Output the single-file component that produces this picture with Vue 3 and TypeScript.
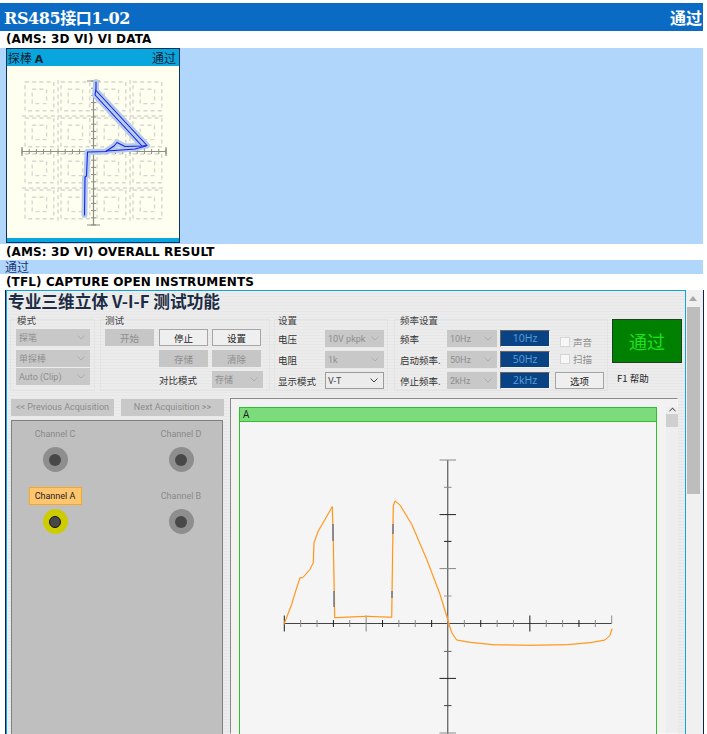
<script setup lang="ts">
type Field = { label: string; value: string; enabled?: boolean }

const modeSelects = ['探笔', '单探棒', 'Auto (Clip)']
const settings: Field[] = [
  { label: '电压', value: '10V pkpk' },
  { label: '电阻', value: '1k' },
  { label: '显示模式', value: 'V-T', enabled: true },
]
const freqRows = [
  { label: '频率', value: '10Hz', shown: '10Hz' },
  { label: '启动频率.', value: '50Hz', shown: '50Hz' },
  { label: '停止频率.', value: '2kHz', shown: '2kHz' },
]
const channels = [
  { name: 'Channel C', active: false },
  { name: 'Channel D', active: false },
  { name: 'Channel A', active: true },
  { name: 'Channel B', active: false },
]

// background marks of the small VI plot, 4 x 4 tiles of 36px
const tiles: { x: number; y: number }[] = []
for (let r = 0; r < 4; r++) {
  for (let c = 0; c < 4; c++) tiles.push({ x: 22 + c * 36, y: 80 + r * 36 })
}

const hTicks = Array.from({ length: 21 }, (_, i) => {
  const x = 284.3 + i * 16.37
  let d = `M${x} 619V626`
  if (i === 0 || i === 5 || i === 15) d = `M${x} 614.5V630.5`
  if (i === 20) d = `M${x} 614.5V622.5`
  const dark = i % 3 === 0 && i !== 5
  return { d, color: dark ? '#1c1c1c' : i === 5 ? '#888' : '#8a8a8a' }
})
const vTicks = [
  { y: 459, long: true, color: '#8a8a8a' },
  { y: 486.3, long: false, color: '#8a8a8a' },
  { y: 513.6, long: true, color: '#222' },
  { y: 540.4, long: false, color: '#222' },
  { y: 567.6, long: true, color: '#888' },
  { y: 595, long: false, color: '#999' },
  { y: 650.4, long: false, color: '#666' },
  { y: 677.4, long: true, color: '#222' },
  { y: 704.6, long: false, color: '#444' },
  { y: 732, long: true, color: '#8a8a8a' },
]

const viTrace =
  'M96 82 L96 89 L95 95 L142 146 L147 145.5 L95.5 90 M142 146 L125 146.5 L117 142.5 L114 146 L108 150 L106 151.5 L87.5 152 L86.5 176 L85 177 L84.5 215'
const viExtra = 'M106 151 L122 150 L135 149 L146 146'
const mainTrace =
  'M284 623.3 L291.7 603.3 L295.7 590 L300 576.7 L302.7 576.7 L310 568.3 L313.3 561.7 L314 541.7 L318.3 530 L332.3 505.7 L333.3 540 L334.7 616.7 L366.7 615.3 L391.7 616.3 L393.3 505 L395 500 L400 504 L411.7 523.3 L426.7 558.3 L440 593.3 L447.7 618.3 L451.7 631.7 L456.7 639 L470 641.3 L493 643.7 L530 644.3 L566.7 643.7 L590 641.7 L605 639 L610 634.3 L612 627.7'
</script>

<template>
  <div class="page">
    <header class="top-bar">
      <span>RS485接口1-02</span>
      <span class="top-result">通过</span>
    </header>

    <div class="section-title">(AMS: 3D VI) VI DATA</div>
    <div class="vi-strip">
      <div class="vi-card">
        <div class="vi-head">
          <span>探棒 <b>A</b></span>
          <span>通过</span>
        </div>
        <svg class="vi-plot" viewBox="7 66 172 172" width="172" height="172">
          <g fill="none" stroke="#d6d6d4" stroke-width="1.4" stroke-dasharray="4 3.2">
            <g v-for="t in tiles" :key="`${t.x}-${t.y}`">
              <rect :x="t.x + 3" :y="t.y + 2" width="28.8" height="28.8" />
              <rect :x="t.x + 10.2" :y="t.y + 9.2" width="14.4" height="14.4" />
            </g>
            <path d="M22 116H166M22 188H166M58 80V224M130 80V224" />
          </g>
          <g stroke="#8d8d86" fill="none">
            <path d="M22 151.5H166M93.5 81V225" stroke-width="1.2" />
            <path v-for="i in 21" :key="i" :d="`M${22 + (i - 1) * 7.2} 149V154`" />
            <path v-for="i in 21" :key="'v' + i" :d="`M91 ${81 + (i - 1) * 7.2}H96`" />
            <path d="M22 147V156M166 147V156M87 81H100M87 225H100" stroke-width="1.2" />
          </g>
          <g fill="none" stroke-linejoin="round" stroke-linecap="round">
            <path :d="viTrace" stroke="#b7cbe8" stroke-width="6" />
            <path :d="viExtra" stroke="#b7cbe8" stroke-width="5" />
            <path :d="viTrace" stroke="#1420f0" stroke-width="1.1" />
            <path :d="viExtra" stroke="#1420f0" stroke-width="1.1" />
          </g>
        </svg>
        <div class="vi-foot"></div>
      </div>
    </div>

    <div class="section-title">(AMS: 3D VI) OVERALL RESULT</div>
    <div class="result-strip">通过</div>
    <div class="section-title">(TFL) CAPTURE OPEN INSTRUMENTS</div>

    <div class="capture">
      <div class="app-window">
        <h1 class="app-title">专业三维立体 V-I-F 测试功能</h1>

        <div class="toolbar">
          <section class="group group-mode">
            <div class="legend">模式</div>
            <div class="mode-list">
              <div v-for="m in modeSelects" :key="m" class="select">
                <span>{{ m }}</span>
                <svg class="chev" viewBox="0 0 8 5" width="8" height="5"><path d="M.5 .5 4 4 7.5 .5" /></svg>
              </div>
            </div>
          </section>

          <section class="group group-test">
            <div class="legend">测试</div>
            <div class="test-grid">
              <button class="btn off">开始</button>
              <button class="btn">停止</button>
              <button class="btn">设置</button>
              <span></span>
              <button class="btn off">存储</button>
              <button class="btn off">清除</button>
              <span></span>
              <span class="label">对比模式</span>
              <div class="select compare">
                <span>存储</span>
                <svg class="chev" viewBox="0 0 8 5" width="8" height="5"><path d="M.5 .5 4 4 7.5 .5" /></svg>
              </div>
            </div>
          </section>

          <section class="group group-set">
            <div class="legend">设置</div>
            <div class="set-grid">
              <template v-for="f in settings" :key="f.label">
                <span class="label">{{ f.label }}</span>
                <div class="select" :class="{ live: f.enabled }">
                  <span>{{ f.value }}</span>
                  <svg class="chev" viewBox="0 0 8 5" width="8" height="5"><path d="M.5 .5 4 4 7.5 .5" /></svg>
                </div>
              </template>
            </div>
          </section>

          <section class="group group-freq">
            <div class="legend">频率设置</div>
            <div class="freq-grid">
              <template v-for="(f, i) in freqRows" :key="f.label">
                <span class="label">{{ f.label }}</span>
                <div class="select">
                  <span>{{ f.value }}</span>
                  <svg class="chev" viewBox="0 0 8 5" width="8" height="5"><path d="M.5 .5 4 4 7.5 .5" /></svg>
                </div>
                <div class="readout">{{ f.shown }}</div>
                <label v-if="i === 0" class="check first"><i></i>声音</label>
                <label v-else-if="i === 1" class="check second"><i></i>扫描</label>
                <button v-else class="btn">选项</button>
              </template>
            </div>
          </section>

          <section class="status">
            <div class="pass">通过</div>
            <div class="help">F1 帮助</div>
          </section>
        </div>

        <div class="work">
          <div class="left-col">
            <div class="nav">
              <div class="nav-btn">&lt;&lt; Previous Acquisition</div>
              <div class="nav-btn">Next Acquisition &gt;&gt;</div>
            </div>
            <div class="channels">
              <div v-for="c in channels" :key="c.name" class="channel">
                <div class="ch-name" :class="{ on: c.active }">{{ c.name }}</div>
                <div class="jack" :class="{ on: c.active }"><i></i></div>
              </div>
            </div>
          </div>

          <div class="plot-panel">
            <div class="plot">
              <div class="plot-head">A</div>
              <svg class="plot-svg" viewBox="240 421 416 313" width="416" height="313">
                <g fill="none">
                  <path d="M284.3 622.5H611.7" stroke="#444" />
                  <path d="M447.7 459V734" stroke="#6f6f6f" stroke-width="1.4" />
                  <path v-for="(t, i) in hTicks" :key="i" :d="t.d" :stroke="t.color" />
                  <path v-for="t in vTicks" :key="t.y"
                    :d="t.long ? `M439.5 ${t.y}H456` : `M444 ${t.y}H451.5`"
                    :stroke="t.color" />
                </g>
                <path :d="mainTrace" fill="none" stroke="#ffc78f" stroke-width="1.6" stroke-opacity=".6" stroke-linejoin="round" />
                <path :d="mainTrace" fill="none" stroke="#ff8c00" stroke-width=".9" stroke-linejoin="round" />
                <path d="M333 523V540M334 590V606M393 523V533M392 590V597" stroke="#4a6a9a" stroke-width="1.2" />
              </svg>
            </div>
            <div class="plot-scroll">
              <svg viewBox="0 0 8 5" width="7" height="5"><path d="M.5 4.5 4 1 7.5 4.5" fill="none" stroke="#555" stroke-width="1.2" /></svg>
              <div class="plot-thumb"></div>
            </div>
          </div>
        </div>
      </div>

      <div class="page-scroll">
        <div class="arrow"></div>
        <div class="thumb"></div>
      </div>
    </div>
  </div>
</template>

<style scoped>
.page {
  width: 707px;
  height: 734px;
  overflow: hidden;
  padding-top: 3px;
  box-sizing: border-box;
  background: #fff;
  font-family: "DejaVu Sans", "Noto Sans CJK SC", sans-serif;
  color: #000;
}

.top-bar {
  width: 703px;
  height: 28px;
  box-sizing: border-box;
  padding: 0 1px 0 4px;
  display: flex;
  align-items: center;
  justify-content: space-between;
  background: #0b6bc4;
  color: #fff;
  font-size: 16px;
  font-weight: 700;
  letter-spacing: -0.4px;
  font-family: "DejaVu Serif", "Noto Sans CJK SC", serif;
}
.top-result {
  font-family: "Noto Sans CJK SC", sans-serif;
  letter-spacing: 0;
}

.section-title {
  height: 16px;
  padding-left: 6px;
  font-size: 12px;
  letter-spacing: 0.12px;
  line-height: 16px;
  font-weight: 700;
  white-space: nowrap;
}
.top-bar + .section-title {
  height: 17px;
}

.vi-strip {
  width: 703px;
  height: 196px;
  background: #b0d6fc;
  padding-left: 6px;
  box-sizing: border-box;
}
.vi-card {
  width: 174px;
  height: 195px;
  box-sizing: border-box;
  border: 1px solid #10305a;
  background: #fffff0;
  display: flex;
  flex-direction: column;
}
.vi-head {
  height: 17px;
  display: flex;
  justify-content: space-between;
  align-items: center;
  padding: 0 3px 0 1px;
  background: #09a6de;
  color: #123;
  font-size: 12px;
  font-family: "Noto Sans CJK SC", sans-serif;
}
.vi-head b {
  font-family: "DejaVu Sans", sans-serif;
  font-size: 11px;
}
.vi-plot {
  display: block;
  flex: none;
}
.vi-foot {
  flex: 1;
  background: #09a6de;
}

.result-strip {
  width: 703px;
  height: 14px;
  padding-left: 5px;
  box-sizing: border-box;
  background: #b0d6fc;
  color: #1a3672;
  font-size: 12px;
  line-height: 14px;
  font-family: "Noto Sans CJK SC", sans-serif;
}

.capture {
  width: 699px;
  height: 444px;
  margin-left: 5px;
  box-sizing: border-box;
  border-left: 1px solid #0b2447;
  border-right: 1px solid #0b2447;
  display: flex;
}
.app-window {
  width: 680px;
  box-sizing: border-box;
  border: 1px solid #0aa5e2;
  border-bottom: none;
  background: repeating-linear-gradient(180deg, #ececec 0 2px, #e7e7e7 2px 3px);
  font-family: "Noto Sans CJK SC", sans-serif;
}
.app-title {
  margin: 0;
  height: 28px;
  padding-left: 1px;
  font-size: 16.7px;
  line-height: 21px;
  font-weight: 700;
  color: #1c2c44;
  white-space: nowrap;
}

.toolbar {
  display: flex;
  padding-left: 3px;
  height: 79px;
  box-sizing: border-box;
  padding-bottom: 7px;
  font-size: 9.5px;
  color: #333;
}
.group {
  position: relative;
  border: 1px solid #e3e3e3;
  box-sizing: border-box;
  padding-top: 9px;
}
.legend {
  position: absolute;
  top: -7px;
  left: 6px;
  line-height: 14px;
  color: #444;
}
.group-mode {
  width: 85px;
  padding-left: 5px;
}
.mode-list {
  display: flex;
  flex-direction: column;
  gap: 1px;
}
.mode-list .select {
  width: 74px;
}
.mode-list .select:first-child {
  margin-bottom: 3px;
}
.group-test {
  width: 170px;
  margin-left: 5px;
  padding-left: 4px;
}
.group-test .legend {
  left: 4px;
}
.test-grid {
  display: grid;
  grid-template-columns: 50px 49px 51px;
  grid-auto-rows: 17px;
  column-gap: 4px;
  row-gap: 4px;
}
.test-grid .btn {
  width: 49px;
}
.group-set {
  width: 114px;
  margin-left: 4px;
  padding: 10px 0 0 3px;
}
.group-set .legend {
  left: 3px;
}
.set-grid {
  display: grid;
  grid-template-columns: 47px 59px;
  grid-auto-rows: 17px;
  row-gap: 4px;
}
.group-freq {
  width: 214px;
  margin-left: 6px;
  padding: 10px 0 0 5px;
}
.group-freq .legend {
  left: 5px;
}
.freq-grid {
  display: grid;
  grid-template-columns: 47px 50px 50px 49px;
  grid-auto-rows: 17px;
  row-gap: 4px;
  column-gap: 0;
}
.freq-grid .readout {
  margin-left: 3px;
  width: 50px;
}
.freq-grid .check {
  margin-left: 13px;
}
.freq-grid .btn {
  margin-left: 8px;
  width: 49px;
}
.label {
  display: flex;
  align-items: center;
  white-space: nowrap;
  color: #333;
}
.select {
  height: 17px;
  box-sizing: border-box;
  display: flex;
  align-items: center;
  justify-content: space-between;
  padding: 0 5px 0 3px;
  background: #c8c8c8;
  color: #8e8e8e;
  font-size: 9px;
  font-family: Roboto, "Noto Sans CJK SC", sans-serif;
  white-space: nowrap;
  overflow: hidden;
}
.select.live {
  background: #ececec;
  border: 1px solid #9c9c9c;
  color: #444;
  padding-left: 2px;
}
.chev {
  flex: none;
  fill: none;
  stroke: #adadad;
  stroke-width: 1;
}
.select.live .chev {
  stroke: #444;
}
.btn {
  padding: 0;
  height: 17px;
  box-sizing: border-box;
  border: 1px solid #a6a6a6;
  background: #efefef;
  color: #222;
  font: inherit;
  font-size: 9.5px;
  line-height: 14px;
}
.btn.off {
  border-color: #c6c6c6;
  background: #c6c6c6;
  color: #8e8e8e;
}
.readout {
  height: 17px;
  box-sizing: border-box;
  border: 1px solid #f4f4f4;
  border-top-color: #666;
  border-left-color: #666;
  background: #0a4384;
  color: #5a9fde;
  font-size: 10.5px;
  font-family: "Open Sans", sans-serif;
  line-height: 15px;
  text-align: center;
}
.check {
  display: flex;
  align-items: center;
  gap: 3px;
  color: #909090;
  font-size: 9.5px;
}
.check.first {
  align-self: end;
  height: 10px;
}
.check.second {
  margin-top: -2px;
}
.check i {
  width: 10px;
  height: 10px;
  background: #f7f7f7;
  border: 1px solid #d6d6d6;
  box-sizing: border-box;
}
.status {
  margin-left: 4px;
  width: 70px;
}
.pass {
  height: 44px;
  box-sizing: border-box;
  border: 1px solid #1f3d1f;
  background: #008000;
  color: #1ee01e;
  font-size: 18px;
  line-height: 42px;
  text-align: center;
}
.help {
  margin: 8px 0 0 5px;
  font-size: 9.5px;
  line-height: 14px;
  color: #222;
}

.work {
  display: flex;
  padding-left: 4px;
  gap: 6px;
}
.left-col {
  width: 213px;
}
.nav {
  display: flex;
  gap: 7px;
  margin-top: 1px;
}
.nav-btn {
  width: 103px;
  height: 17px;
  line-height: 17px;
  text-align: center;
  background: #c8c8c8;
  color: #8c8c8c;
  font-size: 9px;
  font-family: Roboto, sans-serif;
  white-space: nowrap;
}
.channels {
  width: 212px;
  height: 320px;
  margin-top: 4px;
  box-sizing: border-box;
  padding-top: 4px;
  border: 1px solid #808080;
  border-width: 1px 1px 0 1px;
  background: #bfbfbf;
  display: grid;
  grid-template-columns: 86px 88px;
  grid-auto-rows: 47px;
  column-gap: 39px;
  row-gap: 15px;
}
.channel {
  display: flex;
  flex-direction: column;
  align-items: center;
}
.ch-name {
  width: 53px;
  height: 18px;
  box-sizing: border-box;
  text-align: center;
  line-height: 18px;
  color: #8a8a8a;
  font-size: 9px;
  font-family: Roboto, sans-serif;
  white-space: nowrap;
}
.ch-name.on {
  background: #ffc66f;
  border: 1px solid #f7a823;
  line-height: 16px;
  color: #222;
}
.jack {
  margin-top: 4px;
  width: 25px;
  height: 25px;
  box-sizing: border-box;
  border-radius: 50%;
  background: #8e8e8e;
  display: flex;
  align-items: center;
  justify-content: center;
}
.jack i {
  width: 12px;
  height: 12px;
  border-radius: 50%;
  background: #484848;
}
.jack.on {
  background: #cccc00;
}
.jack.on i {
  border: 1.5px solid #111;
  box-sizing: border-box;
}

.plot-panel {
  width: 448px;
  height: 336px;
  box-sizing: border-box;
  border: 1px solid #f7f7f7;
  border-top-color: #8a8a8a;
  border-left-color: #8a8a8a;
  padding: 8px 0 0 8px;
  display: flex;
  background: #f2f2f2;
}
.plot {
  width: 418px;
  flex: none;
}
.plot-head {
  height: 15px;
  box-sizing: border-box;
  border: 1px solid #2fbf2f;
  background: #7cdc7c;
  padding-left: 3px;
  color: #222;
  font-size: 10px;
  line-height: 13px;
  font-family: "Open Sans", sans-serif;
}
.plot-svg {
  display: block;
  box-sizing: content-box;
  border-left: 1px solid #2fbf2f;
  border-right: 1px solid #2fbf2f;
  background: #f5f5f5;
}
.plot-scroll {
  margin-left: 9px;
  width: 12px;
  display: flex;
  flex-direction: column;
  align-items: center;
  background: #eeeeee;
}
.plot-thumb {
  width: 12px;
  height: 13px;
  margin-top: 2px;
  background: #cfcfcf;
}

.page-scroll {
  width: 17px;
  background: #f0f0f0;
  display: flex;
  flex-direction: column;
  align-items: flex-start;
  padding-left: 1px;
  box-sizing: border-box;
}
.arrow {
  margin: 6px 0 0 2px;
  width: 0;
  height: 0;
  border-left: 4px solid transparent;
  border-right: 4px solid transparent;
  border-bottom: 5px solid #a8a8a8;
}
.thumb {
  width: 13px;
  height: 187px;
  margin-top: 6px;
  background: #bdbdbd;
}
</style>

<style>
html,
body {
  margin: 0;
  overflow: hidden;
}
</style>
